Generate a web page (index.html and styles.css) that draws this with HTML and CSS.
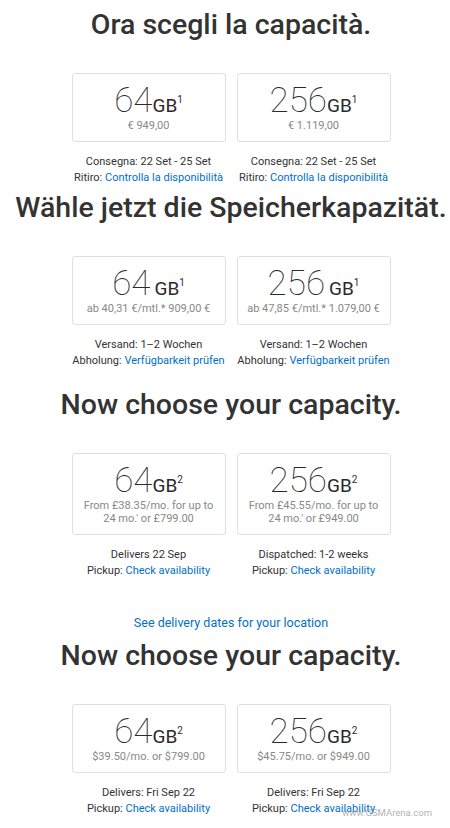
FILE: index.html
```html
<!DOCTYPE html>
<html lang="en">
  <head>
    <meta charset="UTF-8">
    <meta name="viewport" content="width=device-width, initial-scale=1.0">
    <title>Capacity</title>
    <link rel="stylesheet" href="styles.css">
  </head>

  <body>
    <div class="page">
      <div class="section">
        <h2 class="title">Ora scegli la capacità.</h2>
        <div class="cards">
          <div class="option">
            <div class="card">
              <div class="size"><span class="num">64</span><span class="unit">GB</span><sup>1</sup></div>
              <div class="price">€ 949,00</div>
            </div>
            <p class="info">Consegna: 22 Set - 25 Set</p>
            <p class="info">Ritiro: <a href="#">Controlla la disponibilità</a></p>
          </div>
          <div class="option">
            <div class="card">
              <div class="size"><span class="num">256</span><span class="unit">GB</span><sup>1</sup></div>
              <div class="price">€ 1.119,00</div>
            </div>
            <p class="info">Consegna: 22 Set - 25 Set</p>
            <p class="info">Ritiro: <a href="#">Controlla la disponibilità</a></p>
          </div>
        </div>
      </div>

      <div class="section de">
        <h2 class="title">Wähle jetzt die Speicherkapazität.</h2>
        <div class="cards">
          <div class="option">
            <div class="card">
              <div class="size"><span class="num">64</span> <span class="unit">GB</span><sup>1</sup></div>
              <div class="price">ab 40,31 €/mtl.* 909,00 €</div>
            </div>
            <p class="info">Versand: 1–2 Wochen</p>
            <p class="info">Abholung: <a href="#">Verfügbarkeit prüfen</a></p>
          </div>
          <div class="option">
            <div class="card">
              <div class="size"><span class="num">256</span> <span class="unit">GB</span><sup>1</sup></div>
              <div class="price">ab 47,85 €/mtl.* 1.079,00 €</div>
            </div>
            <p class="info">Versand: 1–2 Wochen</p>
            <p class="info">Abholung: <a href="#">Verfügbarkeit prüfen</a></p>
          </div>
        </div>
      </div>

      <div class="section uk">
        <h2 class="title">Now choose your capacity.</h2>
        <div class="cards">
          <div class="option">
            <div class="card">
              <div class="size"><span class="num">64</span><span class="unit">GB</span><sup>2</sup></div>
              <div class="price">From £38.35/mo. for up to<br>24 mo.' or £799.00</div>
            </div>
            <p class="info">Delivers 22 Sep</p>
            <p class="info">Pickup: <a href="#">Check availability</a></p>
          </div>
          <div class="option">
            <div class="card">
              <div class="size"><span class="num">256</span><span class="unit">GB</span><sup>2</sup></div>
              <div class="price">From £45.55/mo. for up to<br>24 mo.' or £949.00</div>
            </div>
            <p class="info">Dispatched: 1-2 weeks</p>
            <p class="info">Pickup: <a href="#">Check availability</a></p>
          </div>
        </div>
        <p class="location"><a href="#">See delivery dates for your location</a></p>
      </div>

      <div class="section">
        <h2 class="title">Now choose your capacity.</h2>
        <div class="cards">
          <div class="option">
            <div class="card">
              <div class="size"><span class="num">64</span><span class="unit">GB</span><sup>2</sup></div>
              <div class="price">$39.50/mo. or $799.00</div>
            </div>
            <p class="info">Delivers: Fri Sep 22</p>
            <p class="info">Pickup: <a href="#">Check availability</a></p>
          </div>
          <div class="option">
            <div class="card">
              <div class="size"><span class="num">256</span><span class="unit">GB</span><sup>2</sup></div>
              <div class="price">$45.75/mo. or $949.00</div>
            </div>
            <p class="info">Delivers: Fri Sep 22</p>
            <p class="info">Pickup: <a href="#">Check availability</a></p>
          </div>
        </div>
      </div>

      <div class="watermark">www.GSMArena.com</div>
    </div>
  </body>
</html>
```

FILE: styles.css
```css
* {
  margin: 0;
  padding: 0;
  box-sizing: border-box;
}

body {
  background-color: #fff;
  font-family: Roboto, "Liberation Sans", sans-serif;
  color: #333;
}

a {
  color: #0070c9;
  text-decoration: none;
}

.page {
  position: relative;
  width: 450px;
  height: 828px;
  padding-left: 12px;
  overflow: hidden;
}

.section {
  text-align: center;
}

.section.de .title {
  padding-top: 6px;
}

.section.uk {
  margin-top: 12px;
}

.title {
  font-size: 28.5px;
  font-weight: 500;
  line-height: 34px;
  color: #333;
  padding-top: 8px;
  white-space: nowrap;
}

.cards {
  display: flex;
  justify-content: center;
  gap: 11px;
  margin-top: 31px;
}

.option {
  width: 154px;
  white-space: nowrap;
}

.card {
  border: 1px solid #e0e0e0;
  border-radius: 3px;
  padding: 9px 0 9px;
}

.size {
  line-height: 36px;
  height: 36px;
  color: #2a2a2a;
}

.num {
  font-size: 35px;
  font-weight: 100;
}

.unit {
  font-size: 19px;
  font-weight: 400;
}

sup {
  font-size: 10px;
  vertical-align: 9px;
  line-height: 0;
}

.price {
  font-size: 11px;
  line-height: 13px;
  color: #888;
}

.info {
  font-size: 11px;
  line-height: 15.5px;
}

.info:first-of-type {
  margin-top: 12px;
}

.location {
  font-size: 12.5px;
  line-height: 16px;
  margin-top: 37px;
}

.watermark {
  position: absolute;
  right: 18px;
  bottom: 10px;
  font-size: 9.5px;
  color: rgba(140, 140, 140, 0.7);
}
```
